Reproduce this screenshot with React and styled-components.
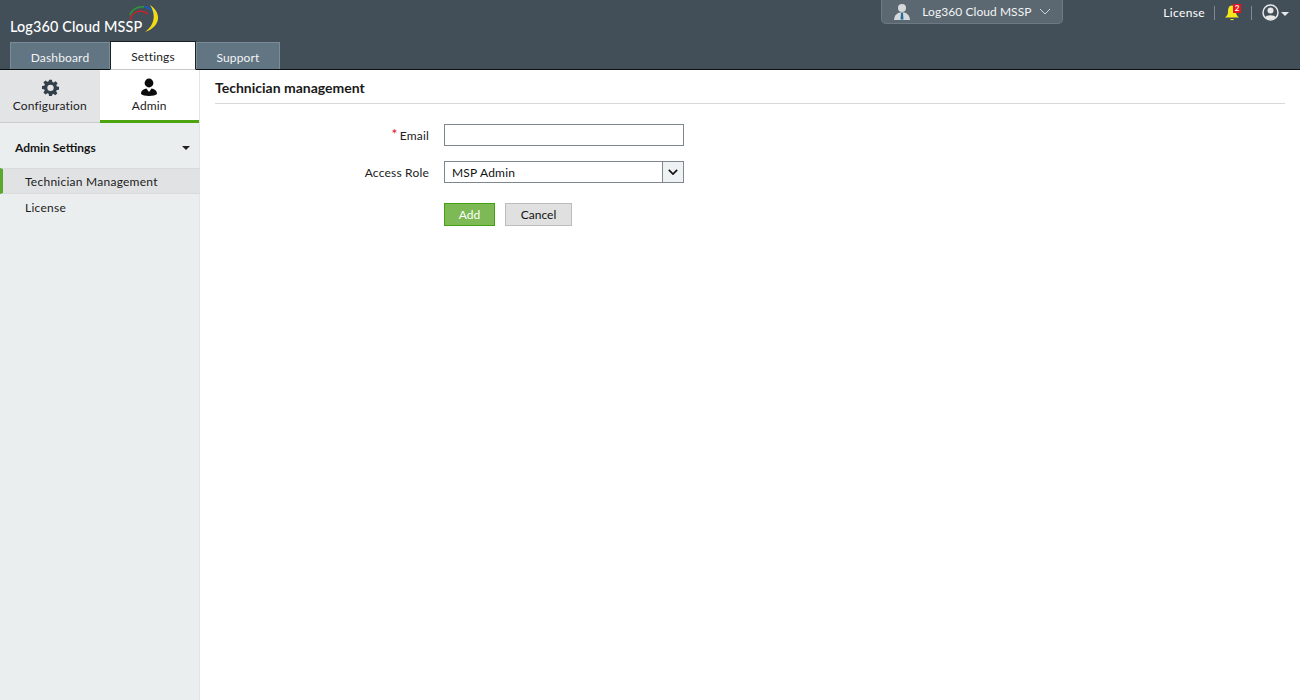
import React from "react";
import styled, { createGlobalStyle } from "styled-components";

const Global = createGlobalStyle`
  html, body { margin: 0; padding: 0; height: 100%; background: #fff; }
  body { font-family: Lato, "Open Sans", "Liberation Sans", sans-serif; font-size: 12px; color: #111; overflow: hidden; }
  #root { height: 100%; }
`;

const Page = styled.div`
  width: 1300px; height: 700px; display: flex; flex-direction: column; background: #fff;
`;
const Header = styled.header`
  height: 69px; flex: none; background: #434f58; border-bottom: 1px solid #0d1114;
  display: flex; flex-direction: column; justify-content: space-between; box-sizing: content-box;
  position: relative; z-index: 1;
`;
const TopRow = styled.div`
  height: 42px; display: flex; justify-content: space-between; padding-right: 11px;
`;
const Brand = styled.div`
  display: flex; align-items: flex-start; padding: 4px 0 0 10px; position: relative; width: 160px;
`;
const BrandName = styled.span`
  color: #fff; font-size: 14.4px; font-weight: 500; margin-top: 14px; white-space: nowrap; letter-spacing: 0.14px;
`;
const LogoMark = styled.svg`
  position: absolute; left: 129px; top: 4px;
`;
const TopRight = styled.div`
  display: flex; align-items: flex-start;
`;
const Account = styled.div`
  width: 182px; height: 24px; margin-right: 100px; box-sizing: border-box;
  background: #5b6871; border: 1px solid #6d7a83; border-top: 0; border-radius: 0 0 5px 5px;
  display: flex; align-items: center; padding-left: 11px; color: #f2f4f5; font-size: 12px;
`;
const AccountName = styled.span`
  margin-left: 11px; margin-right: 7px; white-space: nowrap; letter-spacing: 0.06px;
`;
const Utility = styled.div`
  display: flex; align-items: center; height: 25px;
`;
const LicenseLink = styled.span`
  color: #fff; font-size: 12px; margin-right: 9px; letter-spacing: 0.35px;
`;
const Sep = styled.span`
  width: 1px; height: 14px; background: #7d8a93;
`;
const BellWrap = styled.span`
  position: relative; display: inline-flex; margin: 0 11px 0 9px; width: 16px; height: 16px;
`;
const Badge = styled.span`
  position: absolute; right: -1px; top: -1px; width: 8px; height: 9px; background: #e8131f; color: #fff;
  font-size: 8px; line-height: 9px; font-weight: 700; text-align: center;
`;
const UserMenu = styled.span`
  display: inline-flex; align-items: center; margin-left: 10px; gap: 2px;
`;
const Tabs = styled.nav`
  display: flex; padding-left: 10px; height: 27px; align-items: flex-end;
`;
const Tab = styled.div`
  box-sizing: border-box; width: ${p => p.$w}px; height: ${p => (p.$active ? 29 : 27)}px;
  text-align: center; font-size: 12px; letter-spacing: 0.15px;
  line-height: ${p => (p.$active ? 30 : 29)}px;
  background: ${p => (p.$active ? "#fff" : "#627582")};
  color: ${p => (p.$active ? "#222" : "#f1f4f6")};
  border: 1px solid ${p => (p.$active ? "#1a2228" : "#7a8c98")};
  border-bottom: ${p => (p.$active ? "1px solid #c8c8c8" : "0")};
  margin-bottom: ${p => (p.$active ? -1 : 0)}px;
  position: relative; ${p => (p.$active ? "z-index:1;" : "")}
`;
const Body = styled.div`
  flex: 1; display: flex; min-height: 0;
`;
const Sidebar = styled.aside`
  width: 200px; flex: none; box-sizing: border-box; background: #ebeeef; border-right: 1px solid #e2e5e6;
`;
const SideTabs = styled.div`
  display: flex; height: 53px; background: #fff;
`;
const SideTab = styled.div`
  width: 100px; box-sizing: border-box; display: flex; flex-direction: column; align-items: center;
  padding-top: ${p => (p.$active ? 8 : 9)}px; font-size: 12px; color: #1c1c1c; letter-spacing: 0.15px;
  background: ${p => (p.$active ? "#fff" : "#e3e4e6")};
  border-bottom: ${p => (p.$active ? "3px solid #4ca40f" : "1px solid #c9cccd")};
`;
const GearSlot = styled.span`
  display: inline-flex; margin-left: 2px;
`;
const SideTabLabel = styled.span`
  margin-top: ${p => p.$gap}px;
`;
const GroupHead = styled.div`
  display: flex; align-items: center; justify-content: space-between; height: 45px;
  padding: 3px 9px 0 15px; box-sizing: border-box; font-weight: 700; font-size: 12px; color: #151515;
`;
const Caret = styled.span`
  width: 0; height: 0; border-left: 4px solid transparent; border-right: 4px solid transparent;
  border-top: 4px solid ${p => p.$c || "#222"}; margin-top: ${p => p.$mt || 2}px;
`;
const NavItem = styled.div`
  height: 26px; line-height: 28px; box-sizing: border-box; padding-left: 25px; font-size: 12px; letter-spacing: 0.25px;
  color: #1b1b1b; margin-right: -1px;
  ${p => p.$active ? "background:#e1e2e4; border-top:1px solid #d8dadb; border-bottom:1px solid #d8dadb; border-left:3px solid #5aa92c; padding-left:22px; line-height:26px;" : ""}
`;
const Main = styled.main`
  flex: 1; padding: 0 15px;
`;
const Title = styled.h1`
  margin: 0; height: 33px; line-height: 36px; font-size: 14px; font-weight: 700; color: #1a1a1a;
  border-bottom: 1px solid #d8d8d8; letter-spacing: 0;
`;
const Form = styled.form`
  display: grid; grid-template-columns: 214px 240px; column-gap: 15px; padding-top: 20px;
`;
const Label = styled.label`
  justify-self: end; align-self: center; font-size: 12px; color: #222; letter-spacing: 0.2px;
  margin-bottom: ${p => p.$mb}px;
`;
const Star = styled.span`
  color: #e3122b; margin-right: 2px; font-size: 14px; line-height: 10px; position: relative; top: -1px;
`;
const TextInput = styled.input`
  box-sizing: border-box; width: 240px; height: 22px; border: 1px solid #7e878d; padding: 0 7px; background: #fff; outline: none;
  margin-bottom: 15px;
`;
const SelectBox = styled.div`
  box-sizing: border-box; width: 240px; height: 22px; border: 1px solid #7e878d; display: flex; align-items: center;
  justify-content: space-between; padding-left: 7px; font-size: 12px; color: #111; letter-spacing: 0.2px; margin-bottom: 20px;
`;
const SelectArrow = styled.span`
  width: 20px; height: 100%; border-left: 1px solid #7e878d; background: #eff2f3; display: flex; align-items: center; justify-content: center;
`;
const Actions = styled.div`
  grid-column: 2; display: flex; gap: 10px; align-items: center;
`;
const Btn = styled.button`
  box-sizing: border-box; height: 23px; padding: 0; width: ${p => p.$w}px; font: inherit; font-size: 12px;
  background: ${p => (p.$primary ? "#7db955" : "#e0e0e0")};
  border: 1px solid ${p => (p.$primary ? "#45a010" : "#bcbcbc")};
  color: ${p => (p.$primary ? "#fff" : "#111")};
`;

const Logo = () => (
  <LogoMark width="31" height="29" viewBox="0 0 31 29" fill="none">
    <path d="M1 16 C3 8 11 4 19 10" stroke="#e01b24" strokeWidth="1.2" />
    <path d="M1 11 C4 3 14 0 23 6" stroke="#2e9a34" strokeWidth="1.5" />
    <path d="M15 3 C24 3 30 13 23 24" stroke="#1f55b8" strokeWidth="1.8" />
    <path d="M21 1 C32 8 33 22 16 28 C26 21 27 10 21 1 Z" fill="#f1dc14" />
  </LogoMark>
);

const UserTieIcon = () => (
  <svg width="18" height="18" viewBox="0 0 18 18">
    <circle cx="9" cy="5" r="4" fill="#d5d9dc" />
    <path d="M1 17 C1.5 11.5 4.5 10 7 9.5 L11 9.5 C13.5 10 16.5 11.5 17 17 Z" fill="#d5d9dc" />
    <path d="M8 10 L10 10 L10.5 16.5 L7.5 16.5 Z" fill="#23709e" />
  </svg>
);

const Chevron = ({ w = 12, h = 7, c = "#cfd5d9", sw = 1 }) => (
  <svg width={w} height={h} viewBox="0 0 12 7" fill="none">
    <path d="M1 1 L6 6 L11 1" stroke={c} strokeWidth={sw} />
  </svg>
);

const Bell = () => (
  <svg width="16" height="16" viewBox="0 0 15 16">
    <path d="M7.5 0.5 C11 0.5 11.5 4 11.5 7 C11.5 10 13 11 14.5 12.5 L0.5 12.5 C2 11 3.5 10 3.5 7 C3.5 4 4 0.5 7.5 0.5 Z" fill="#f4e81c" />
    <path d="M5.5 14 L9.5 14 C9 15.5 6 15.5 5.5 14 Z" fill="#f4e81c" />
  </svg>
);

const UserCircle = () => (
  <svg width="17" height="17" viewBox="0 0 17 17" fill="none">
    <circle cx="8.5" cy="8.5" r="7.5" stroke="#e6e8ea" strokeWidth="1.5" />
    <circle cx="8.5" cy="6.5" r="3" fill="#e6e8ea" />
    <path d="M3 13.5 C4.5 10.5 12.5 10.5 14 13.5 C12 16 5 16 3 13.5 Z" fill="#e6e8ea" />
  </svg>
);

const Gear = () => (
  <svg width="17" height="17" viewBox="0 0 24 24">
    <path fill="#33404a" fillRule="evenodd" d="M10 1h4l.6 3.2 1.9.8L19.2 3.2l2.8 2.8-1.8 2.7.8 1.9L24 11v4l-3.2.6-.8 1.9 1.8 2.7-2.8 2.8-2.7-1.8-1.9.8L14 24h-4l-.6-3.2-1.9-.8-2.7 1.8L2 19.2l1.8-2.7L3 14.6 0 14v-4l3.2-.6.8-1.9L2 4.8 4.8 2l2.7 1.8 1.9-.8L10 1Zm2 7a4.5 4.5 0 1 0 0 9 4.5 4.5 0 0 0 0-9Z" />
  </svg>
);

const AdminIcon = () => (
  <svg width="18" height="19" viewBox="0 0 18 19">
    <circle cx="9" cy="5" r="4.4" fill="#0c0c0c" />
    <path d="M1 16 C1 12 4 11 6.5 10.5 L8.5 13.5 L9.5 13.5 L11.5 10.5 C14 11 17 12 17 16 C15 18.5 3 18.5 1 16 Z" fill="#0c0c0c" />
  </svg>
);

export default function App() {
  return (
    <Page>
      <Global />
      <Header>
        <TopRow>
          <Brand>
            <BrandName>Log360 Cloud MSSP</BrandName>
            <Logo />
          </Brand>
          <TopRight>
            <Account>
              <UserTieIcon />
              <AccountName>Log360 Cloud MSSP</AccountName>
              <Chevron />
            </Account>
            <Utility>
              <LicenseLink>License</LicenseLink>
              <Sep />
              <BellWrap>
                <Bell />
                <Badge>2</Badge>
              </BellWrap>
              <Sep />
              <UserMenu>
                <UserCircle />
                <Caret $c="#e6e8ea" />
              </UserMenu>
            </Utility>
          </TopRight>
        </TopRow>
        <Tabs>
          <Tab $w={100}>Dashboard</Tab>
          <Tab $w={86} $active>Settings</Tab>
          <Tab $w={84}>Support</Tab>
        </Tabs>
      </Header>
      <Body>
        <Sidebar>
          <SideTabs>
            <SideTab>
              <GearSlot><Gear /></GearSlot>
              <SideTabLabel $gap={2}>Configuration</SideTabLabel>
            </SideTab>
            <SideTab $active>
              <AdminIcon />
              <SideTabLabel $gap={1}>Admin</SideTabLabel>
            </SideTab>
          </SideTabs>
          <GroupHead>
            Admin Settings
            <Caret />
          </GroupHead>
          <NavItem $active>Technician Management</NavItem>
          <NavItem>License</NavItem>
        </Sidebar>
        <Main>
          <Title>Technician management</Title>
          <Form>
            <Label $mb={15}><Star>*</Star>Email</Label>
            <TextInput />
            <Label $mb={20}>Access Role</Label>
            <SelectBox>
              MSP Admin
              <SelectArrow><Chevron w={10} h={6} c="#111" sw={2} /></SelectArrow>
            </SelectBox>
            <Actions>
              <Btn type="button" $primary $w={51}>Add</Btn>
              <Btn type="button" $w={67}>Cancel</Btn>
            </Actions>
          </Form>
        </Main>
      </Body>
    </Page>
  );
}
